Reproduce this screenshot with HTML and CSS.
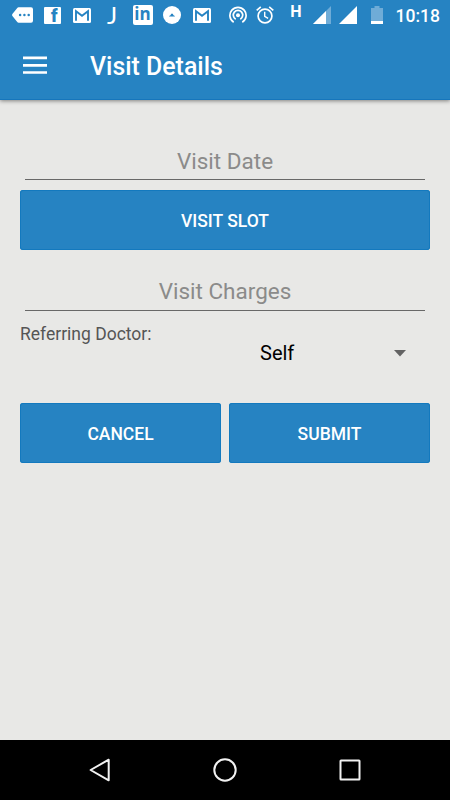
FILE: index.html
```html
<!DOCTYPE html>
<html lang="en">
  <head>
    <meta charset="UTF-8" />
    <meta name="viewport" content="width=device-width, initial-scale=1.0" />
    <title>Visit Details</title>
    <link rel="stylesheet" href="styles.css">
  </head>
  <body>
    <div class="status-bar">
      <!-- Notifications -->
      <div class="cell more">
        <svg width="21" height="16" viewBox="0 0 22 16">
          <path fill="#fff" d="M7 0h13q2 0 2 2v12q0 2-2 2H7q-1 0-1.700-1L.4 9q-.6-1 0-2l4.900-6Q6 0 7 0z" />
          <g fill="#2683c2">
            <circle cx="8.500" cy="8" r="1.300" />
            <circle cx="13" cy="8" r="1.300" />
            <circle cx="17.500" cy="8" r="1.300" />
          </g>
        </svg>
      </div>
      <div class="cell"><span class="fb">f</span></div>
      <div class="cell">
        <svg width="18" height="15" viewBox="0 0 18 15">
          <rect width="18" height="15" rx="1.500" fill="#fff" />
          <path d="M3 12.800V3.200l6 4.600 6-4.600v9.600" fill="none" stroke="#2683c2" stroke-width="1.900" />
        </svg>
      </div>
      <div class="cell"><span class="jay">J</span></div>
      <div class="cell"><span class="linkedin">in</span></div>
      <div class="cell">
        <svg width="18" height="18" viewBox="0 0 18 18">
          <circle cx="9" cy="9" r="9" fill="#fff" />
          <path d="M6 10.500q.3-1 1.500-1.300Q8 7.500 9 7.500t1.500 1.700q1.200.3 1.500 1.300z" fill="#2683c2" />
        </svg>
      </div>
      <div class="cell">
        <svg width="18" height="15" viewBox="0 0 18 15">
          <rect width="18" height="15" rx="1.500" fill="#fff" />
          <path d="M3 12.800V3.200l6 4.600 6-4.600v9.600" fill="none" stroke="#2683c2" stroke-width="1.900" />
        </svg>
      </div>

      <!-- System icons -->
      <div class="cell hotspot">
        <svg width="18" height="18" viewBox="0 0 18 18" fill="none" stroke="#fff" stroke-width="1.700">
          <path d="M4.700 16.300A8.100 8.100 0 1 1 13.300 16.300" />
          <path d="M6.700 13.200A4.700 4.700 0 1 1 11.300 13.200" />
          <circle cx="9" cy="9.200" r="2" fill="#fff" stroke="none" />
        </svg>
      </div>
      <div class="cell alarm">
        <svg width="18" height="18" viewBox="0 0 18 18" fill="none" stroke="#fff" stroke-width="1.700">
          <circle cx="9" cy="10" r="6.900" />
          <path d="M.7 4.300L4.800.9M17.300 4.300L13.200.9" />
          <path d="M8.700 5.800v4.500l3.400 2.100" stroke-width="1.400" />
        </svg>
      </div>
      <div class="cell network"><span>H</span></div>
      <div class="cell signal">
        <svg width="18" height="18" viewBox="0 0 18 18">
          <path d="M18 0v18H0z" fill="#6facd7" />
          <path d="M13 5v13H0z" fill="#fff" />
        </svg>
      </div>
      <div class="cell signal">
        <svg width="18" height="18" viewBox="0 0 18 18">
          <path d="M18 0v18H0z" fill="#fff" />
        </svg>
      </div>
      <div class="cell battery">
        <svg width="12" height="18" viewBox="0 0 12 18">
          <path d="M3.500 0h5v2H12v16H0V2h3.500z" fill="#6facd7" />
          <path d="M0 15h12v3H0z" fill="#fff" />
        </svg>
      </div>
      <span class="clock">10:18</span>
    </div>

    <div class="toolbar">
      <button class="menu" aria-label="Menu">
        <svg width="24" height="18" viewBox="0 0 24 18">
          <path d="M0 1.900h24M0 9.400h24M0 16.500h24" stroke="#fff" stroke-width="2.600" />
        </svg>
      </button>
      <h1>Visit Details</h1>
    </div>

    <form class="content">
      <input class="field" type="text" placeholder="Visit Date" />
      <button class="btn btn-slot" type="button">VISIT SLOT</button>
      <input class="field field-charges" type="text" placeholder="Visit Charges" />

      <div class="doctor">
        <label>Referring Doctor:</label>
        <div class="spinner">
          <span>Self</span>
          <svg width="12" height="7" viewBox="0 0 12 7">
            <path d="M0 0h12L6 6.500z" fill="#636363" />
          </svg>
        </div>
      </div>

      <div class="actions">
        <button class="btn" type="button">CANCEL</button>
        <button class="btn" type="button">SUBMIT</button>
      </div>
    </form>

    <div class="nav-bar">
      <svg width="26" height="26" viewBox="0 0 26 26">
        <path d="M21.700 2.700v20.600L3.600 13z" />
      </svg>
      <svg width="26" height="26" viewBox="0 0 26 26">
        <circle cx="13" cy="13" r="10.700" />
      </svg>
      <svg width="26" height="26" viewBox="0 0 26 26">
        <rect x="3.500" y="3.500" width="19" height="19" rx=".5" />
      </svg>
    </div>
  </body>
</html>
```

FILE: styles.css
```css
* {
  box-sizing: border-box;
}
body {
  display: flex;
  flex-direction: column;
  height: 100vh;
  margin: 0;
  overflow: hidden;
  background-color: #e8e8e6;
  font-family: Roboto, sans-serif;
}
svg {
  display: block;
}
button {
  border: none;
  padding: 0;
  font-family: inherit;
  cursor: pointer;
}

/* Status bar */
.status-bar {
  display: flex;
  position: relative;
  z-index: 1;
  height: 30px;
  padding-left: 7px;
  background-color: #2683c2;
  color: white;
}
.cell {
  display: flex;
  flex: none;
  justify-content: center;
  align-items: center;
  width: 30px;
  height: 30px;
}
.more {
  padding-left: 1px;
}
.fb {
  width: 17px;
  height: 17px;
  padding-right: 3px;
  border-radius: 1px;
  background-color: white;
  color: #2683c2;
  font-size: 18px;
  font-weight: 900;
  line-height: 18px;
  text-align: right;
}
.jay {
  font-family: Lato, sans-serif;
  font-size: 24px;
  line-height: 28px;
}
.linkedin {
  width: 20px;
  height: 20px;
  margin-left: 1px;
  border-radius: 2px;
  background-color: white;
  color: #2683c2;
  font-family: "Open Sans", sans-serif;
  font-size: 17px;
  font-weight: bold;
  line-height: 18px;
  text-align: center;
}
.hotspot {
  width: 28px;
  margin-left: 7px;
}
.alarm {
  width: 26px;
}
.network {
  width: 34px;
  padding: 0 0 8px 2px;
  font-size: 16px;
  font-weight: bold;
}
.signal {
  width: 26px;
  justify-content: flex-start;
  padding-left: 1px;
}
.battery {
  width: 25px;
}
.clock {
  margin-left: auto;
  padding-right: 10px;
  font-size: 17.500px;
  font-weight: 500;
  line-height: 32px;
}

/* Toolbar */
.toolbar {
  display: flex;
  flex: none;
  align-items: center;
  height: 70px;
  padding-left: 23px;
  background-color: #2683c2;
  border-bottom: 1px solid #1676bc;
  box-shadow: 0 1px 4px rgba(0, 0, 0, 0.45);
}
.menu {
  background: none;
}
.toolbar h1 {
  margin: 4px 0 0 43px;
  color: white;
  font-size: 24.900px;
  font-weight: 500;
}

/* Visit form */
.content {
  display: flex;
  flex: 1;
  flex-direction: column;
  padding: 40px 20px 0;
}
.field {
  height: 40px;
  margin: 0 5px;
  padding: 2px 0 0;
  border: none;
  border-bottom: 1px solid #686868;
  outline: none;
  background: none;
  font-family: inherit;
  font-size: 22.500px;
  text-align: center;
}
.field::placeholder {
  color: #8b8b8a;
  opacity: 1;
}
.field-charges {
  margin-top: 21px;
  padding-top: 1px;
}
.btn {
  height: 60px;
  padding-top: 2px;
  border-radius: 3px;
  background-color: #2683c2;
  box-shadow: inset 0 0 0 1px #1379be;
  color: white;
  font-size: 17.500px;
  font-weight: 500;
}
.btn-slot {
  margin-top: 10px;
}
.doctor {
  display: flex;
  height: 92px;
}
.doctor label {
  width: 240px;
  padding-top: 13px;
  color: #555;
  font-size: 17.500px;
  line-height: 21px;
}
.spinner {
  display: flex;
  flex: 1;
  justify-content: space-between;
  align-items: center;
  height: 60px;
  margin-top: 12px;
  padding-right: 24px;
  color: #000;
  font-size: 20px;
}
.actions {
  display: grid;
  grid-template-columns: 1fr 1fr;
  gap: 8px;
}

/* Navigation bar */
.nav-bar {
  display: flex;
  flex: none;
  justify-content: space-between;
  align-items: center;
  height: 60px;
  padding: 0 87px;
  background-color: #000;
}
.nav-bar svg {
  fill: none;
  stroke: #f2f2f2;
  stroke-width: 2;
  stroke-linejoin: round;
}
```
